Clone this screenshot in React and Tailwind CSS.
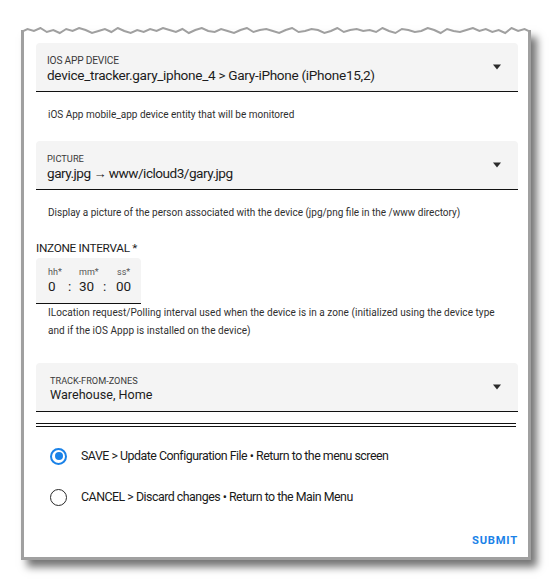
import React from 'react'

// Jagged "torn paper" edge along the top of the card
const tornPoints = (() => {
  const ys = [4, 1, 3, 0, 4, 2, 5, 1, 3, 0, 2, 5, 3, 1, 4, 0, 3, 5, 2, 4, 1, 3, 0, 2, 4, 1, 5, 2, 0, 3, 4, 1, 3, 5, 2, 0, 4, 2, 1, 3, 5, 2, 0, 4, 3, 1, 2, 5, 3, 0, 4, 2, 1, 3, 2, 4, 0, 3, 5, 1, 2, 4, 3, 0, 2, 5, 1, 3, 4, 2, 0, 3, 1, 4, 2, 5, 0, 3, 1, 4]
  const step = 510 / (ys.length - 1)
  return ys.map((y, i) => `${(i * step).toFixed(1)},${y + 1}`).join(' ')
})()

const Caret = () => (
  <svg width="10" height="6" viewBox="0 0 10 6" className="shrink-0">
    <path d="M1 0.5 L9 0.5 L5 5.5 Z" fill="#2b2b2b" />
  </svg>
)

const SelectField = ({ label, value, labelClass, valueClass, padClass = 'pl-[11px]' }) => (
  <div className={`h-[49px] bg-[#f4f4f4] rounded-t-[4px] border-b border-[#111] flex items-center pr-[16px] ${padClass}`}>
    <div className="flex-1 self-start pt-[12px]">
      <div className={`leading-[12px] uppercase text-[#3a3a3a] ${labelClass}`}>{label}</div>
      <div className={`leading-[16px] whitespace-nowrap text-[#1c1c1c] ${valueClass}`}>{value}</div>
    </div>
    <Caret />
  </div>
)

const Helper = ({ children, className = '' }) => (
  <div className={`px-[12px] text-[10px] text-[#2f2f2f] ${className}`}>{children}</div>
)

const Radio = ({ checked, label }) => (
  <div className="flex items-center h-[18px]">
    <div className="w-[45px] flex justify-center">
      {checked ? (
        <div className="w-[17px] h-[17px] rounded-full border-2 border-[#1a82e8] flex items-center justify-center">
          <div className="w-[8px] h-[8px] rounded-full bg-[#1a82e8]" />
        </div>
      ) : (
        <div className="w-[17px] h-[17px] rounded-full border-[1.5px] border-[#2a2a2a]" />
      )}
    </div>
    <span className="text-[12.4px] tracking-[-0.5px] text-[#1a1a1a]">{label}</span>
  </div>
)

export default function App() {
  return (
    <div className="w-[552px] h-[580px] bg-white pt-[30px] pl-[21px] font-['Roboto',sans-serif] overflow-hidden">
      <div className="relative w-[510px] h-[530px] bg-white border-x-[3px] border-b-[3px] border-[#a0a0a0] shadow-[6px_7px_8px_rgba(0,0,0,0.55)]">
        <svg className="absolute -top-[3px] -left-[3px]" width="510" height="9" viewBox="0 0 510 9">
          <polyline points={tornPoints} fill="none" stroke="#a0a0a0" strokeWidth="2" />
        </svg>

        <div className="pt-[13px] pl-[12px] pr-[10px]">
          <SelectField
            label="IOS App Device"
            value="device_tracker.gary_iphone_4 > Gary-iPhone (iPhone15,2)"
            labelClass="text-[10.2px] tracking-[-0.2px]"
            valueClass="text-[13.6px] tracking-[-0.3px]"
          />
          <Helper className="pt-[17px] leading-[12px]">
            iOS App mobile_app device entity that will be monitored
          </Helper>

          <div className="mt-[20px]">
            <SelectField
              label="Picture"
              labelClass="text-[9.3px]"
              valueClass="text-[13.6px] tracking-[-0.5px]"
              value={
                <>
                  gary.jpg <span className="text-[13px]">→</span> www/icloud3/gary.jpg
                </>
              }
            />
          </div>
          <Helper className="pt-[17px] leading-[12px]">
            Display a picture of the person associated with the device (jpg/png file in the /www directory)
          </Helper>

          <div className="mt-[22px] text-[11.8px] tracking-[-0.3px] leading-[14px] text-[#1c1c1c]">INZONE INTERVAL *</div>
          <div className="mt-[3px] w-[105px] h-[46px] bg-[#f4f4f4] rounded-t-[4px] border-b border-[#111] pl-[12px] pt-[9px]">
            <div className="grid grid-cols-[31px_38px_30px] text-[9px] leading-[11px] text-[#555]">
              <span>hh*</span>
              <span>mm*</span>
              <span>ss*</span>
            </div>
            <div className="flex text-[13.5px] leading-[17px] text-[#1c1c1c]">
              <span className="w-[20px]">0</span>
              <span className="w-[11px]">:</span>
              <span className="w-[24px]">30</span>
              <span className="w-[13px]">:</span>
              <span>00</span>
            </div>
          </div>
          <Helper className="leading-[18px] tracking-[0.05px]">
            ILocation request/Polling interval used when the device is in a zone (initialized using the device type
            <br />
            and if the iOS Appp is installed on the device)
          </Helper>

          <div className="mt-[23px]">
            <SelectField
              label="Track-From-Zones"
              value="Warehouse, Home"
              padClass="pl-[14px]"
              labelClass="text-[9.2px]"
              valueClass="text-[12.6px]"
            />
          </div>

          <div className="mt-[11px] mr-[2px] h-[4px] border-y border-[#111]" />

          <div className="mt-[20px] flex flex-col gap-[23px]">
            <Radio checked label="SAVE > Update Configuration File • Return to the menu screen" />
            <Radio label="CANCEL > Discard changes • Return to the Main Menu" />
          </div>

          <div className="mt-[27px] flex justify-end">
            <span className="text-[11.2px] font-bold tracking-[0.8px] text-[#1a82e8]">SUBMIT</span>
          </div>
        </div>
      </div>
    </div>
  )
}
